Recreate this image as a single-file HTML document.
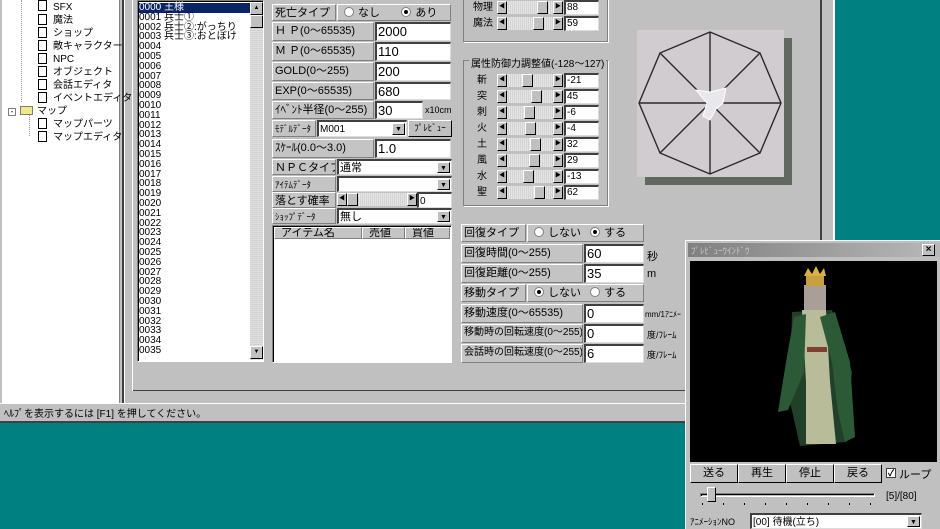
<!DOCTYPE html>
<html><head><meta charset="utf-8"><style>
*{box-sizing:border-box;margin:0;padding:0}
body{width:940px;height:529px;overflow:hidden;background:#008080;font-family:"Liberation Sans","Noto Sans CJK JP",sans-serif;font-size:11px;color:#000;position:relative}
.a{position:absolute}
.g{background:#c0c0c0}
.w{background:#fff}
.sunk{border-top:1px solid #808080;border-left:1px solid #808080;border-bottom:1px solid #fff;border-right:1px solid #fff;box-shadow:inset 1px 1px 0 #000}
.lab{background:#c4c4c4;border-top:1px solid #fff;border-left:1px solid #fff;border-bottom:1px solid #808080;border-right:1px solid #808080;padding-left:2px;line-height:16px;white-space:nowrap;overflow:hidden;font-size:11px}
.inp{background:#fff;border-top:2px solid #404040;border-left:2px solid #404040;border-bottom:1px solid #dcdcdc;border-right:1px solid #dcdcdc;padding-left:1px;font-size:13px;line-height:15px;white-space:nowrap;overflow:hidden}
.dd{position:absolute;right:1px;top:1px;width:13px;bottom:1px;background:#c0c0c0;border-top:1px solid #fff;border-left:1px solid #fff;border-bottom:1px solid #000;border-right:1px solid #000;font-size:7px;text-align:center;line-height:12px}
.btn{background:#c0c0c0;border-top:1px solid #fff;border-left:1px solid #fff;border-bottom:1px solid #000;border-right:1px solid #000;text-align:center;font-size:11px}
.ab{position:absolute;width:10px;height:13px;background:#c0c0c0;border-top:1px solid #fff;border-left:1px solid #fff;border-bottom:1px solid #000;border-right:1px solid #000;font-size:6px;line-height:11px;text-align:center}
.tr{position:absolute;height:13px;background:repeating-linear-gradient(90deg,#e4e4e4 0 1px,#d4d4d4 1px 2px)}
.th{position:absolute;width:11px;height:13px;background:#c0c0c0;border-top:1px solid #fff;border-left:1px solid #fff;border-bottom:1px solid #000;border-right:1px solid #000}
.rb{display:inline-block;width:10px;height:10px;border-radius:50%;background:#fff;border:1px solid #808080;vertical-align:-1px;margin-right:4px;position:relative}
.rb.on:after{content:"";position:absolute;left:2px;top:2px;width:4px;height:4px;border-radius:50%;background:#000}
.li{position:absolute;left:139px;font-size:10px;line-height:9.8px;font-family:"Liberation Sans Narrow","Liberation Sans","Noto Sans CJK JP",sans-serif}
.tree{position:absolute;font-size:10px;line-height:13px}
.doc{position:absolute;width:9px;height:11px;border:1px solid #000;background:#fff}
</style></head><body>
<div class="a g" style="left:0;top:0;width:835px;height:423px"></div>
<div class="a" style="left:820px;top:0;width:2px;height:404px;background:#404040"></div>
<div class="a" style="left:833px;top:0;width:2px;height:423px;background:#fff"></div>
<div class="a w" style="left:2px;top:0;width:118px;height:403px;border-right:1px solid #808080"></div>
<div class="a" style="left:122px;top:0;width:2px;height:403px;background:#404040"></div>
<div class="a" style="left:124px;top:0;width:1px;height:403px;background:#fff"></div>
<div class="a" style="left:21px;top:0;width:1px;height:102px;border-left:1px dotted #999"></div>
<div class="a" style="left:29px;top:112px;width:1px;height:24px;border-left:1px dotted #999"></div>
<div class="doc" style="left:38px;top:0"></div><div class="tree" style="left:53px;top:1px">SFX</div>
<div class="doc" style="left:38px;top:14px"></div><div class="tree" style="left:53px;top:14px">魔法</div>
<div class="doc" style="left:38px;top:27px"></div><div class="tree" style="left:53px;top:27px">ショップ</div>
<div class="doc" style="left:38px;top:40px"></div><div class="tree" style="left:53px;top:40px">敵キャラクター</div>
<div class="doc" style="left:38px;top:53px"></div><div class="tree" style="left:53px;top:53px">NPC</div>
<div class="doc" style="left:38px;top:66px"></div><div class="tree" style="left:53px;top:66px">オブジェクト</div>
<div class="doc" style="left:38px;top:79px"></div><div class="tree" style="left:53px;top:79px">会話エディタ</div>
<div class="doc" style="left:38px;top:92px"></div><div class="tree" style="left:53px;top:92px">イベントエディタ</div>
<div class="a" style="left:8px;top:108px;width:8px;height:8px;border:1px solid #808080;background:#fff;font-size:8px;line-height:6px;text-align:center">-</div>
<div class="a" style="left:20px;top:106px;width:13px;height:9px;background:#f0e890;border:1px solid #808060"></div>
<div class="tree" style="left:37px;top:105px">マップ</div>
<div class="doc" style="left:38px;top:118px"></div><div class="tree" style="left:53px;top:118px">マップパーツ</div>
<div class="doc" style="left:38px;top:131px"></div><div class="tree" style="left:53px;top:131px">マップエディタ</div>
<div class="a" style="left:132px;top:390px;width:688px;height:1px;background:#404040"></div>
<div class="a" style="left:132px;top:0;width:1px;height:391px;background:#fff"></div>
<div class="a w sunk" style="left:137px;top:0;width:127px;height:362px"></div>
<div class="a" style="left:139px;top:3px;width:111px;height:10px;background:#0a246a"></div>
<div class="a" style="left:250px;top:2px;width:13px;height:358px;background:repeating-linear-gradient(0deg,#e0e0e0 0 1px,#d0d0d0 1px 2px)"></div>
<div class="ab" style="left:250px;top:2px;width:13px">▲</div>
<div class="th" style="left:250px;top:15px;width:13px"></div>
<div class="ab" style="left:250px;top:346px;width:13px">▼</div>
<div class="li" style="top:3px;color:#000">
<span style="color:#fff">0000 王様</span><br>0001 兵士①<br>0002 兵士②:がっちり<br>0003 兵士③:おとぼけ<br>0004<br>0005<br>0006<br>0007<br>0008<br>0009<br>0010<br>0011<br>0012<br>0013<br>0014<br>0015<br>0016<br>0017<br>0018<br>0019<br>0020<br>0021<br>0022<br>0023<br>0024<br>0025<br>0026<br>0027<br>0028<br>0029<br>0030<br>0031<br>0032<br>0033<br>0034<br>0035</div>
<div class="a lab" style="left:272px;top:4px;width:64px;height:17px">死亡タイプ</div>
<div class="a lab" style="left:337px;top:4px;width:114px;height:17px;padding-left:6px"><span class="rb"></span>なし&nbsp;&nbsp;&nbsp;&nbsp;&nbsp;&nbsp;&nbsp;<span class="rb on"></span>あり</div>
<div class="a lab" style="left:272px;top:22px;width:102px;height:19px">Ｈ Ｐ(0～65535)</div><div class="a inp" style="left:375px;top:22px;width:76px;height:19px">2000</div>
<div class="a lab" style="left:272px;top:42px;width:102px;height:19px">Ｍ Ｐ(0～65535)</div><div class="a inp" style="left:375px;top:42px;width:76px;height:19px">110</div>
<div class="a lab" style="left:272px;top:62px;width:102px;height:19px">GOLD(0～255)</div><div class="a inp" style="left:375px;top:62px;width:76px;height:19px">200</div>
<div class="a lab" style="left:272px;top:82px;width:102px;height:18px">EXP(0～65535)</div><div class="a inp" style="left:375px;top:82px;width:76px;height:18px">680</div>
<div class="a lab" style="left:272px;top:101px;width:102px;height:18px">ｲﾍﾞﾝﾄ半径(0～255)</div><div class="a inp" style="left:375px;top:101px;width:48px;height:18px">30</div><div class="a" style="left:425px;top:105px;font-size:9px">x10cm</div>
<div class="a lab" style="left:272px;top:120px;width:44px;height:17px;font-size:9px">ﾓﾃﾞﾙﾃﾞｰﾀ</div><div class="a inp" style="left:317px;top:120px;width:90px;height:17px;font-size:10px">M001<div class="dd">▼</div></div>
<div class="a btn" style="left:408px;top:120px;width:44px;height:17px;font-size:9px;line-height:15px">ﾌﾟﾚﾋﾞｭｰ</div>
<div class="a lab" style="left:272px;top:139px;width:102px;height:19px">ｽｹｰﾙ(0.0～3.0)</div><div class="a inp" style="left:375px;top:139px;width:76px;height:19px">1.0</div>
<div class="a lab" style="left:272px;top:159px;width:64px;height:16px">ＮＰＣタイプ</div><div class="a inp" style="left:337px;top:159px;width:115px;height:16px;font-size:11px">通常<div class="dd">▼</div></div>
<div class="a lab" style="left:272px;top:176px;width:64px;height:16px;font-size:9px">ｱｲﾃﾑﾃﾞｰﾀ</div><div class="a inp" style="left:337px;top:176px;width:115px;height:16px"><div class="dd">▼</div></div>
<div class="a lab" style="left:272px;top:192px;width:64px;height:16px">落とす確率</div>
<div class="tr" style="left:337px;top:193px;width:80px"></div><div class="ab" style="left:337px;top:193px">◀</div><div class="th" style="left:347px;top:193px"></div><div class="ab" style="left:407px;top:193px">▶</div>
<div class="a inp" style="left:417px;top:192px;width:35px;height:16px;font-size:10px">0</div>
<div class="a lab" style="left:272px;top:208px;width:64px;height:16px;font-size:9px">ｼｮｯﾌﾟﾃﾞｰﾀ</div><div class="a inp" style="left:337px;top:208px;width:115px;height:16px;font-size:11px">無し<div class="dd">▼</div></div>
<div class="a w sunk" style="left:272px;top:225px;width:180px;height:138px"></div>
<div class="a lab" style="left:274px;top:227px;width:88px;height:12px;line-height:11px;padding-left:6px">アイテム名</div>
<div class="a lab" style="left:362px;top:227px;width:43px;height:12px;line-height:11px;padding-left:6px">売値</div>
<div class="a lab" style="left:405px;top:227px;width:45px;height:12px;line-height:11px;padding-left:6px">買値</div>
<div class="a" style="left:463px;top:-2px;width:145px;height:44px;border:1px solid #808080;box-shadow:1px 1px 0 #fff"></div>
<div class="a" style="left:463px;top:60px;width:145px;height:146px;border:1px solid #808080;box-shadow:1px 1px 0 #fff"></div>
<div class="a g" style="left:469px;top:55px;padding:0 2px;font-size:10px">属性防御力調整値(-128～127)</div>
<div id="sl"></div>
<div class="a" style="left:645px;top:38px;width:147px;height:147px;background:#606860"></div>
<svg class="a" style="left:637px;top:30px" width="147" height="147">
<rect width="147" height="147" fill="#d0ccd0"/>
<g stroke="#2a2a2a" stroke-width="1.4" fill="none">
<polygon points="73,2 123,23 144,73 123,123 73,144 23,123 2,73 23,23"/>
<line x1="73" y1="2" x2="73" y2="144"/><line x1="2" y1="73" x2="144" y2="73"/>
<line x1="23" y1="23" x2="123" y2="123"/><line x1="123" y1="23" x2="23" y2="123"/></g>
<polygon points="73,62 89,58 86,73 79,79 73,90 66,86 70,73 59,60" fill="#e8e8ec" stroke="#fff" stroke-width="1"/>
</svg>
<div class="a lab" style="left:461px;top:224px;width:65px;height:18px">回復タイプ</div>
<div class="a lab" style="left:527px;top:224px;width:117px;height:18px;padding-left:6px"><span class="rb"></span>しない&nbsp;&nbsp;&nbsp;<span class="rb on"></span>する</div>
<div class="a lab" style="left:461px;top:244px;width:122px;height:19px">回復時間(0～255)</div><div class="a inp" style="left:584px;top:244px;width:60px;height:19px">60</div><div class="a" style="left:647px;top:248px">秒</div>
<div class="a lab" style="left:461px;top:264px;width:122px;height:19px">回復距離(0～255)</div><div class="a inp" style="left:584px;top:264px;width:60px;height:19px">35</div><div class="a" style="left:647px;top:268px">m</div>
<div class="a lab" style="left:461px;top:284px;width:65px;height:18px">移動タイプ</div>
<div class="a lab" style="left:527px;top:284px;width:117px;height:18px;padding-left:6px"><span class="rb on"></span>しない&nbsp;&nbsp;&nbsp;<span class="rb"></span>する</div>
<div class="a lab" style="left:461px;top:304px;width:122px;height:19px">移動速度(0～65535)</div><div class="a inp" style="left:584px;top:304px;width:60px;height:19px">0</div><div class="a" style="left:645px;top:309px;font-size:8px">mm/1ｱﾆﾒｰ</div>
<div class="a lab" style="left:461px;top:324px;width:122px;height:19px;font-size:10px">移動時の回転速度(0～255)</div><div class="a inp" style="left:584px;top:324px;width:60px;height:19px">0</div><div class="a" style="left:647px;top:328px;font-size:9px">度/ﾌﾚｰﾑ</div>
<div class="a lab" style="left:461px;top:344px;width:122px;height:19px;font-size:10px">会話時の回転速度(0～255)</div><div class="a inp" style="left:584px;top:344px;width:60px;height:19px">6</div><div class="a" style="left:647px;top:348px;font-size:9px">度/ﾌﾚｰﾑ</div>
<div class="a" style="left:0;top:403px;width:835px;height:1px;background:#fff"></div>
<div class="a" style="left:4px;top:405px;font-size:10px">ﾍﾙﾌﾟを表示するには [F1] を押してください。</div>
<div class="a" style="left:0;top:421px;width:835px;height:2px;background:#404040"></div>
<div class="a g" style="left:685px;top:240px;width:255px;height:289px;border-top:1px solid #fff;border-left:1px solid #fff"></div>
<div class="a" style="left:688px;top:243px;width:252px;height:14px;background:linear-gradient(90deg,#808080,#b8b8b8)"></div>
<div class="a" style="left:691px;top:244px;font-size:9px;color:#c8c8c8">ﾌﾟﾚﾋﾞｭｰｳｲﾝﾄﾞｳ</div>
<div class="a btn" style="left:922px;top:244px;width:13px;height:12px;font-size:10px;line-height:10px;font-weight:bold">×</div>
<div class="a" style="left:690px;top:261px;width:247px;height:201px;background:#000"></div>
<svg class="a" style="left:760px;top:262px" width="110" height="200">
<polygon points="32,50 72,48 92,110 86,180 40,184 30,140" fill="#20402a"/>
<polygon points="42,48 66,48 70,120 76,182 46,182 46,120" fill="#b8bc98"/>
<polygon points="60,55 75,50 90,100 95,175 85,180 78,150 72,100" fill="#2d5a36"/>
<polygon points="34,55 46,52 44,110 28,148 18,150 26,100" fill="#2d5a36"/>
<rect x="47" y="85" width="20" height="5" fill="#804030"/>
<rect x="44" y="23" width="22" height="25" fill="#a8a098"/>
<rect x="46" y="14" width="18" height="10" fill="#c8a040"/>
<polygon points="44,14 48,6 52,12 56,4 60,12 64,6 66,14" fill="#d8b048"/>
</svg>
<div class="a btn" style="left:690px;top:464px;width:48px;height:19px;line-height:17px">送る</div>
<div class="a btn" style="left:738px;top:464px;width:48px;height:19px;line-height:17px">再生</div>
<div class="a btn" style="left:786px;top:464px;width:48px;height:19px;line-height:17px">停止</div>
<div class="a btn" style="left:834px;top:464px;width:48px;height:19px;line-height:17px">戻る</div>
<div class="a w" style="left:886px;top:468px;width:10px;height:10px;border:1px solid #404040;font-size:9px;line-height:8px;text-align:center;font-weight:bold">✓</div>
<div class="a" style="left:899px;top:466px">ループ</div>
<div class="a sunk" style="left:700px;top:493px;width:175px;height:4px"></div>
<div class="a btn" style="left:707px;top:487px;width:9px;height:15px"></div>
<div class="a" style="left:702px;top:503px;width:170px;height:2px;background:repeating-linear-gradient(90deg,#000 0 1px,transparent 1px 21px)"></div>
<div class="a" style="left:886px;top:491px;font-size:10px">[5]/[80]</div>
<div class="a" style="left:690px;top:515px;font-size:9px">ｱﾆﾒｰｼｮﾝNO</div>
<div class="a inp" style="left:750px;top:513px;width:172px;height:16px;font-size:10px">[00] 待機(立ち)<div class="dd">▼</div></div>
<script>
var h='';
function row(lab,v,t,x){var p=507+Math.round((v+128)/255*36);
return '<div class="a" style="left:'+x+'px;top:'+(t+1)+'px;font-size:10px;line-height:12px">'+lab+'</div><div class="tr" style="left:497px;top:'+t+'px;width:66px"></div><div class="ab" style="left:497px;top:'+t+'px">◀</div><div class="th" style="left:'+p+'px;top:'+t+'px"></div><div class="ab" style="left:553px;top:'+t+'px">▶</div><div class="a inp" style="left:564px;top:'+(t-1)+'px;width:35px;height:15px;font-size:10px;line-height:12px">'+v+'</div>';}
h+=row('物理',88,1,473)+row('魔法',59,17,473);
var L=['斬','突','刺','火','土','風','水','聖'],V=[-21,45,-6,-4,32,29,-13,62];
for(var i=0;i<8;i++)h+=row(L[i],V[i],74+i*16,477);
document.getElementById('sl').outerHTML=h;
</script>
</body></html>
